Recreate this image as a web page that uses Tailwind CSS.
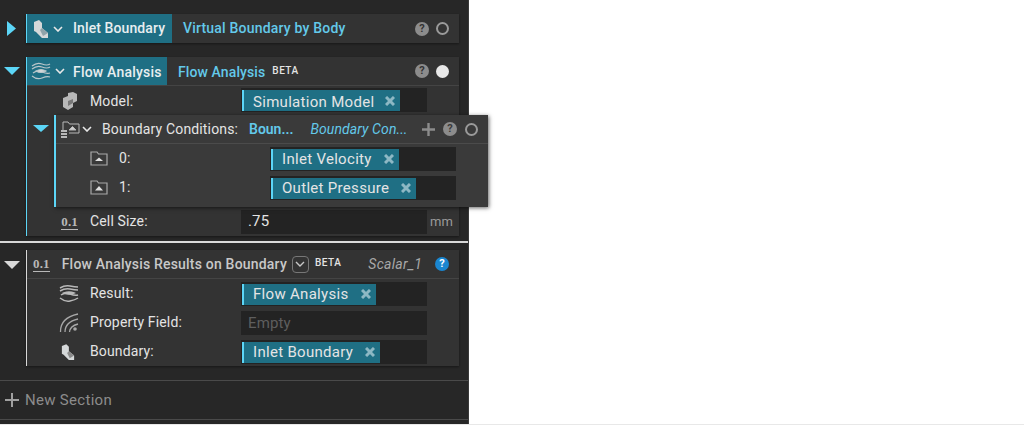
<!DOCTYPE html>
<html>
<head>
<meta charset="utf-8">
<script src="https://cdn.jsdelivr.net/npm/@tailwindcss/browser@4"></script>
</head>
<body class="bg-white overflow-hidden font-['Roboto',sans-serif]">
<div class="h-[425px] w-[1024px] overflow-hidden border-b border-[#e8e8e8]">
<div class="w-[469px] h-[424px] bg-[#272727] border-r border-[#3a3a3a] flex flex-col text-[14px] text-[#e4e4e4] tracking-[.15px]">

  <!-- Card 1 -->
  <div class="flex pt-[14px] h-[43px] shrink-0">
    <div class="w-[26px] flex justify-center items-center pr-[3px]">
      <svg width="9" height="15" viewBox="0 0 9 15"><path d="M0 0L9 7.500L0 15Z" fill="#5cd6f7"/></svg>
    </div>
    <div class="w-[433px] h-[29px] bg-[#333333] flex items-center shadow-[0_1px_2px_rgba(0,0,0,.4)]">
      <div class="w-[146px] h-full bg-[#1f6f84] border-l-[1px] border-[#5cd6f7] flex items-center pl-[6px] font-medium">
        <svg width="16" height="20" viewBox="0 0 16 20"><path d="M1 3L6 1L9 4L9 9L15 14L15 19L9 19L3 13L1 12Z" fill="#d5d8d9"/><path d="M9 9L15 14L10 17L7 11Z" fill="#8fa3aa"/></svg>
        <svg class="ml-[4px]" width="10" height="6" viewBox="0 0 10 6"><path d="M1 1L5 5L9 1" fill="none" stroke="#e8e8e8" stroke-width="1.6"/></svg>
        <span class="ml-[10px] whitespace-nowrap text-[#e8eef0] tracking-[.1px]">Inlet Boundary</span>
      </div>
      <span class="ml-[11px] text-[#63c9ea] font-medium tracking-[.2px]">Virtual Boundary by Body</span>
      <div class="ml-auto flex items-center gap-[7px] pr-[10px]">
        <span class="w-[14px] h-[14px] rounded-full bg-[#8c8c8c] text-[#333] text-[11px] leading-[14px] font-bold text-center">?</span>
        <span class="w-[13px] h-[13px] rounded-full border-[2.5px] border-[#9a9a9a]"></span>
      </div>
    </div>
  </div>

  <!-- Card 2 -->
  <div class="flex pt-[14px] h-[193px] shrink-0">
    <div class="w-[26px] flex justify-center pt-[10px] pr-[2px]">
      <svg width="16" height="8" viewBox="0 0 16 8"><path d="M0 0H16L8 8Z" fill="#5cd6f7"/></svg>
    </div>
    <div class="w-[433px] h-[179px] bg-[#333333] border-l-[1px] border-[#5cd6f7] shadow-[0_1px_2px_rgba(0,0,0,.4)]">
      <div class="h-[29px] flex items-center border-b border-[#444444]">
        <div class="w-[140px] h-[28px] bg-[#1f6f84] flex items-center pl-[4px] font-medium shrink-0 pt-[2px]">
          <svg class="-mt-[2px]" width="20" height="18" viewBox="0 0 20 18" fill="none" stroke="#b9c6ca" stroke-width="1.200"><path d="M1 4Q6 0 11 2T19 2M1 7Q6 3 11 5T19 5M1 14Q6 18 11 16T19 15M2 11Q6 8 11 10T19 11"/><path d="M5 9Q10 6 15 9Q10 12 5 9Z" fill="#d5d8d9"/></svg>
          <svg class="ml-[4px] -mt-[2px]" width="10" height="6" viewBox="0 0 10 6"><path d="M1 1L5 5L9 1" fill="none" stroke="#e8e8e8" stroke-width="1.6"/></svg>
          <span class="ml-[8px] whitespace-nowrap text-[#e8eef0] tracking-[.2px]">Flow Analysis</span>
        </div>
        <span class="ml-[11px] pt-[2px] text-[#63c9ea] font-medium whitespace-nowrap tracking-[.1px]">Flow Analysis</span>
        <span class="ml-[7px] mb-[1px] text-[10px] font-medium tracking-[.5px]">BETA</span>
        <div class="ml-auto flex items-center gap-[7px] pr-[10px]">
          <span class="w-[14px] h-[14px] rounded-full bg-[#8c8c8c] text-[#333] text-[11px] leading-[14px] font-bold text-center">?</span>
          <span class="w-[13px] h-[13px] rounded-full bg-[#e8e8e8]"></span>
        </div>
      </div>
      <!-- Model -->
      <div class="h-[29px] flex items-start">
        <div class="w-[51px] h-[29px] flex justify-end items-center shrink-0">
          <svg width="16" height="18" viewBox="0 0 16 18"><path d="M1 6L6 4V1L11 0L15 2V9L11 11V15L6 18L1 15Z" fill="#b8b8b8"/><path d="M6 9L11 7V11L6 14Z" fill="#777"/></svg>
        </div>
        <span class="ml-[12px] h-[29px] leading-[31px] w-[151px] shrink-0">Model:</span>
        <div class="mt-[2px] w-[186px] h-[24px] bg-[#232323] pt-[2px] pl-[1px] shrink-0">
          <div class="h-[21px] w-fit bg-[#1f6f84] border-l-[2px] border-[#5cd6f7] flex items-center pl-[9px] pr-[3px] overflow-hidden text-[15px]">
            <span class="whitespace-nowrap pt-[3px] tracking-[.3px]">Simulation Model</span>
            <svg class="ml-[11px] mr-[2px]" width="10" height="10" viewBox="0 0 10 10"><path d="M1 1L9 9M9 1L1 9" stroke="#8db8c4" stroke-width="3"/></svg>
          </div>
        </div>
      </div>
      <!-- Popup section -->
      <div class="relative z-10 ml-[27px] w-[434px] h-[92px] bg-[#3a3a3a] border-l-[2px] border-[#5cd6f7] shadow-[1px_1px_4px_rgba(0,0,0,.6)] ">
        <div class="h-[29px] flex items-center border-b border-[#4b4b4b]">
          <span class="absolute left-[-23px] top-[10px]"><svg class="block" width="16" height="7" viewBox="0 0 16 7"><path d="M0 0H16L8 7Z" fill="#5cd6f7"/></svg></span>
          <svg class="ml-[4px]" width="20" height="18" viewBox="0 0 20 18" fill="none" stroke="#b8b8b8" stroke-width="1"><path d="M3 10V2H8L9.500 4H19V13H9"/><path d="M9 10L12.500 6.500L16 10Z" fill="#d0d0d0"/><path d="M1 11H7M1 14H7M1 17H7" stroke-width="2"/></svg>
          <svg class="ml-[2px]" width="10" height="6" viewBox="0 0 10 6"><path d="M1 1L5 5L9 1" fill="none" stroke="#e8e8e8" stroke-width="1.6"/></svg>
          <span class="ml-[10px] w-[147px] shrink-0 text-[14px] whitespace-nowrap">Boundary Conditions:</span>
          <span class="text-[#63c9ea] font-semibold text-[14px] whitespace-nowrap tracking-normal">Boun...</span>
          <span class="ml-[17px] text-[#63c9ea] italic text-[14px] whitespace-nowrap tracking-[.1px]">Boundary Con...</span>
          <div class="ml-auto flex items-center gap-[8px] pr-[10px]">
            <svg width="13" height="13" viewBox="0 0 13 13"><path d="M6.500 0V13M0 6.500H13" stroke="#8c8c8c" stroke-width="2.400"/></svg>
            <span class="w-[14px] h-[14px] rounded-full bg-[#8c8c8c] text-[#3a3a3a] text-[11px] leading-[14px] font-bold text-center">?</span>
            <span class="w-[13px] h-[13px] rounded-full border-[2.5px] border-[#9a9a9a]"></span>
          </div>
        </div>
        <div class="h-[29px] flex items-center">
          <svg class="ml-[34px]" width="18" height="15" viewBox="0 0 18 15" fill="none" stroke="#a8a8a8" stroke-width="1.200"><path d="M1 14V1H7L8.500 3H17V14Z"/><path d="M5 10L9 6.500L13 10Z" fill="#e0e0e0" stroke="none"/></svg>
          <span class="ml-[11px] w-[151px] shrink-0">0:</span>
          <div class="w-[186px] h-[24px] bg-[#232323] pt-[2px] pl-[1px] shrink-0">
            <div class="h-[21px] w-fit bg-[#1f6f84] border-l-[2px] border-[#5cd6f7] flex items-center pl-[9px] pr-[3px]">
              <span class="whitespace-nowrap text-[15px] pt-[1px] tracking-[.3px]">Inlet Velocity</span>
              <svg class="ml-[12px] mr-[2px]" width="10" height="10" viewBox="0 0 10 10"><path d="M1 1L9 9M9 1L1 9" stroke="#8db8c4" stroke-width="3"/></svg>
            </div>
          </div>
        </div>
        <div class="h-[29px] flex items-center">
          <svg class="ml-[34px]" width="18" height="15" viewBox="0 0 18 15" fill="none" stroke="#a8a8a8" stroke-width="1.200"><path d="M1 14V1H7L8.500 3H17V14Z"/><path d="M5 10.500L9 6L13 10.500Z" fill="#e0e0e0" stroke="none"/></svg>
          <span class="ml-[11px] w-[151px] shrink-0">1:</span>
          <div class="w-[186px] h-[24px] bg-[#232323] pt-[2px] pl-[1px] shrink-0">
            <div class="h-[21px] w-fit bg-[#1f6f84] border-l-[2px] border-[#5cd6f7] flex items-center pl-[9px] pr-[3px]">
              <span class="whitespace-nowrap text-[15px] pt-[1px] tracking-[.3px]">Outlet Pressure</span>
              <svg class="ml-[12px] mr-[2px]" width="10" height="10" viewBox="0 0 10 10"><path d="M1 1L9 9M9 1L1 9" stroke="#8db8c4" stroke-width="3"/></svg>
            </div>
          </div>
        </div>
      </div>
      <!-- Cell size -->
      <div class="h-[29px] flex items-center">
        <span class="w-[51px] shrink-0 text-right text-[#b8b8b8] font-['Liberation_Serif',serif] text-[13px] font-bold leading-[14px]"><span class="border-b border-[#b8b8b8]">0.1</span></span>
        <span class="ml-[12px] w-[151px] shrink-0">Cell Size:</span>
        <div class="w-[186px] h-[24px] bg-[#232323] flex items-center pl-[7px] shrink-0 text-[15px]">.75</div>
        <span class="ml-[3px] text-[#9a9a9a] text-[13px]">mm</span>
      </div>
    </div>
  </div>

  <div class="mt-[5px] h-[2px] bg-[#d8d8d8] shrink-0"></div>

  <!-- Card 3 -->
  <div class="flex pt-[7px] h-[123px] shrink-0">
    <div class="w-[26px] flex justify-center pt-[11px] pr-[2px]">
      <svg width="16" height="8" viewBox="0 0 16 8"><path d="M0 0H16L8 8Z" fill="#d8d8d8"/></svg>
    </div>
    <div class="w-[433px] h-[116px] bg-[#333333] border-l-[1px] border-[#d8d8d8] shadow-[0_1px_2px_rgba(0,0,0,.4)]">
      <div class="h-[29px] flex items-center border-b border-[#444444]">
        <span class="ml-[6px] text-[#b8b8b8] font-['Liberation_Serif',serif] text-[13px] font-bold leading-[14px]"><span class="border-b border-[#b8b8b8]">0.1</span></span>
        <span class="ml-[12px] text-[14px] font-medium tracking-[.2px] text-[#c8c8c8] whitespace-nowrap">Flow Analysis Results on Boundary</span>
        <span class="ml-[5px] w-[17px] h-[17px] rounded-[4px] border border-[#777] flex items-center justify-center"><svg width="10" height="6" viewBox="0 0 10 6"><path d="M1 1L5 5L9 1" fill="none" stroke="#c8c8c8" stroke-width="1.400"/></svg></span>
        <span class="ml-[6px] mb-[4px] text-[10px] font-medium tracking-[.5px]">BETA</span>
        <span class="ml-[27px] italic text-[14px] tracking-[.3px] text-[#a8a8a8] whitespace-nowrap">Scalar_1</span>
        <span class="ml-auto mr-[10px] w-[14px] h-[14px] rounded-full bg-[#1a86d0] text-white text-[11px] leading-[14px] font-bold text-center">?</span>
      </div>
      <div class="h-[29px] flex items-center">
        <div class="w-[52px] flex justify-end shrink-0">
          <svg width="20" height="17" viewBox="0 0 20 17" fill="none" stroke="#b8b8b8" stroke-width="1.500"><path d="M1 3Q6 0 11 1T19 2M1 6Q6 3 11 4T19 5M1 13Q6 17 11 16T19 13M2 10Q6 7 11 9T19 10"/><path d="M5 8Q10 6 15 8Q10 10 5 8Z" fill="#d5d8d9"/></svg>
        </div>
        <span class="ml-[11px] w-[151px] shrink-0 text-[14px]">Result:</span>
        <div class="w-[186px] h-[24px] bg-[#232323] pt-[2px] pl-[1px] shrink-0">
          <div class="h-[21px] w-fit bg-[#1f6f84] border-l-[2px] border-[#5cd6f7] flex items-center pl-[9px] pr-[3px]">
            <span class="whitespace-nowrap text-[15px] pt-[1px] tracking-[.3px]">Flow Analysis</span>
            <svg class="ml-[12px] mr-[2px]" width="10" height="10" viewBox="0 0 10 10"><path d="M1 1L9 9M9 1L1 9" stroke="#8db8c4" stroke-width="3"/></svg>
          </div>
        </div>
      </div>
      <div class="h-[29px] flex items-center">
        <div class="w-[52px] flex justify-end shrink-0">
          <svg width="20" height="20" viewBox="0 0 20 20" fill="none" stroke="#a8a8a8" stroke-width="1.300"><path d="M1.500 19Q1 5 19 1M6 19Q6 9 19 6M10.500 19Q11 13 19 11"/><circle cx="16" cy="16" r="1.800" fill="#a8a8a8" stroke="none"/></svg>
        </div>
        <span class="ml-[11px] w-[151px] shrink-0">Property Field:</span>
        <div class="w-[186px] h-[24px] bg-[#232323] flex items-center pl-[7px] pt-[1px] text-[#5e5e5e] text-[15px] shrink-0">Empty</div>
      </div>
      <div class="h-[29px] flex items-center">
        <div class="w-[48px] flex justify-end shrink-0">
          <svg width="14" height="18" viewBox="0 0 16 20"><path d="M1 3L6 1L9 4L9 9L15 14L15 19L9 19L3 13L1 12Z" fill="#d5d8d9"/><path d="M9 9L15 14L10 17L7 11Z" fill="#8a8a8a"/></svg>
        </div>
        <span class="ml-[15px] w-[151px] shrink-0">Boundary:</span>
        <div class="w-[186px] h-[24px] bg-[#232323] pt-[2px] pl-[1px] shrink-0">
          <div class="h-[21px] w-fit bg-[#1f6f84] border-l-[2px] border-[#5cd6f7] flex items-center pl-[9px] pr-[3px]">
            <span class="whitespace-nowrap text-[15px] pt-[1px] tracking-[.3px]">Inlet Boundary</span>
            <svg class="ml-[12px] mr-[2px]" width="10" height="10" viewBox="0 0 10 10"><path d="M1 1L9 9M9 1L1 9" stroke="#8db8c4" stroke-width="3"/></svg>
          </div>
        </div>
      </div>
    </div>
  </div>

  <!-- New section -->
  <div class="mt-[14px] h-[40px] border-y border-[#4a4a4a] flex items-center pl-[4px] text-[#8c8c8c] shrink-0">
    <svg width="16" height="16" viewBox="0 0 16 16"><path d="M8 1V15M1 8H15" stroke="#a0a0a0" stroke-width="2"/></svg>
    <span class="ml-[5px] pt-[1px] text-[15px] tracking-[.3px]">New Section</span>
  </div>
</div>
</div>
</body>
</html>
